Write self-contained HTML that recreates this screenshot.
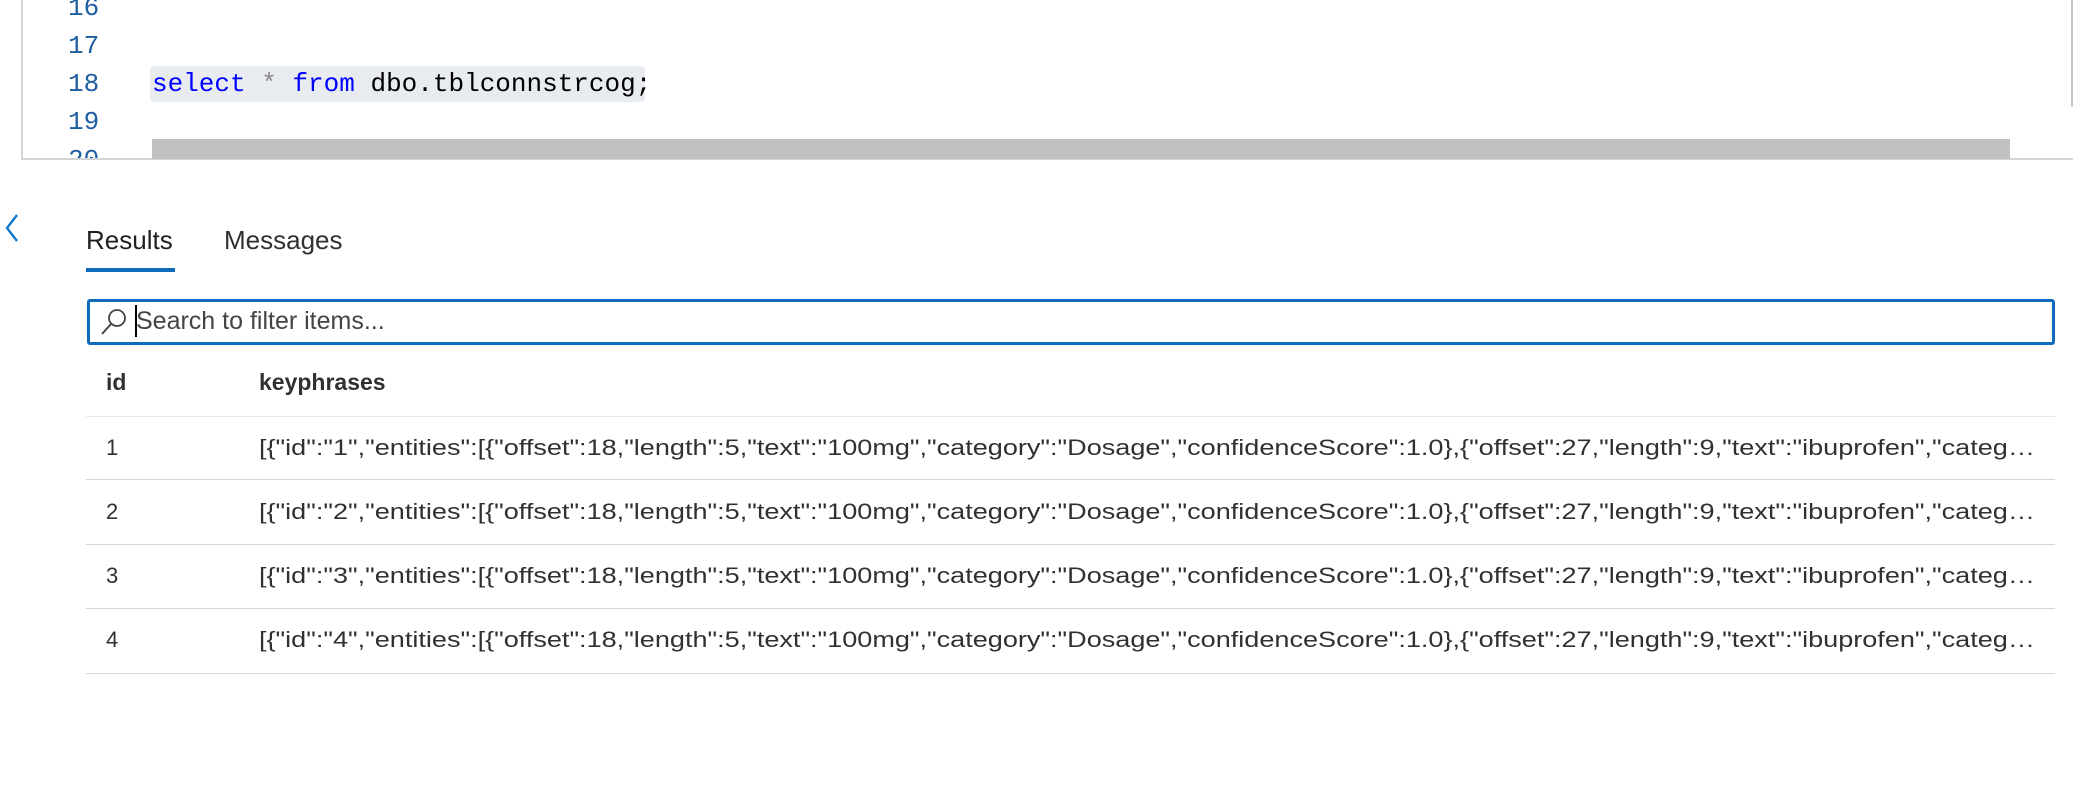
<!DOCTYPE html>
<html><head><meta charset="utf-8"><style>
body{margin:0;width:2076px;height:790px;background:#fff;position:relative;overflow:hidden;font-family:"Liberation Sans",sans-serif;}
.a{position:absolute;}
.ln{position:absolute;left:68px;font-family:"Liberation Mono",monospace;font-size:26px;color:#1f5ea0;line-height:38px;}
.code{font-family:"Liberation Mono",monospace;font-size:26px;line-height:38px;white-space:pre;}
.row{position:absolute;left:86px;width:1969px;height:1px;background:#d6d6d6;}
.cell{position:absolute;font-size:22px;color:#323130;line-height:30px;white-space:nowrap;}
.kp{left:259px;width:1453px;overflow:hidden;text-overflow:ellipsis;transform:scaleX(1.23);transform-origin:0 0;}
</style></head><body>
<div class="a" style="left:21px;top:0;width:2px;height:160px;background:#d4d4d4"></div>
<div class="a" style="left:21px;top:158px;width:2052px;height:2px;background:#d4d4d4"></div>
<div class="a" style="left:2071px;top:0;width:2px;height:107px;background:#c8c8c8"></div>
<div class="ln" style="top:-11px">16</div>
<div class="ln" style="top:27px">17</div>
<div class="ln" style="top:65px">18</div>
<div class="ln" style="top:103px">19</div>
<div class="ln" style="top:141px;height:17px;overflow:hidden">20</div>
<div class="a" style="left:150px;top:66px;width:495px;height:36px;background:#e8ebf0;border-radius:4px"></div>
<div class="a code" style="left:152px;top:65px"><span style="color:#0000ff">select</span> <span style="color:#888">*</span> <span style="color:#0000ff">from</span> dbo.tblconnstrcog;</div>
<div class="a" style="left:152px;top:139px;width:1858px;height:20px;background:#c1c1c1"></div>
<svg class="a" style="left:2px;top:212px" width="20" height="32" viewBox="0 0 20 32"><path d="M15 3 L5 16 L15 29" fill="none" stroke="#0f7ad0" stroke-width="2.4"/></svg>
<div class="a" style="left:86px;top:225px;font-size:26px;color:#201f1e">Results</div>
<div class="a" style="left:224px;top:225px;font-size:26px;color:#323130">Messages</div>
<div class="a" style="left:86px;top:268px;width:89px;height:4px;background:#0f6cbd"></div>
<div class="a" style="left:87px;top:299px;width:1962px;height:40px;border:3px solid #0f6cbd;border-radius:3px"></div>
<svg class="a" style="left:100px;top:307px" width="28" height="30" viewBox="0 0 28 30"><circle cx="17" cy="11" r="8" fill="none" stroke="#444" stroke-width="1.8"/><path d="M11 17 L2 27" stroke="#444" stroke-width="2"/></svg>
<div class="a" style="left:135px;top:305px;width:2px;height:32px;background:#000"></div>
<div class="a" style="left:136px;top:305px;font-size:25px;color:#444;line-height:32px">Search to filter items...</div>
<div class="cell" style="left:106px;top:367px;font-weight:bold;color:#323130;font-size:23px">id</div>
<div class="cell" style="left:259px;top:367px;font-weight:bold;color:#323130;font-size:23px">keyphrases</div>
<div class="row" style="top:416px;background:#e8e8e8"></div>
<div class="cell" style="left:106px;top:433px">1</div>
<div class="cell kp" style="top:433px">[{"id":"1","entities":[{"offset":18,"length":5,"text":"100mg","category":"Dosage","confidenceScore":1.0},{"offset":27,"length":9,"text":"ibuprofen","category":"MedicationName","confidenceScore":1.0}]}]</div>
<div class="row" style="top:479px"></div>
<div class="cell" style="left:106px;top:497px">2</div>
<div class="cell kp" style="top:497px">[{"id":"2","entities":[{"offset":18,"length":5,"text":"100mg","category":"Dosage","confidenceScore":1.0},{"offset":27,"length":9,"text":"ibuprofen","category":"MedicationName","confidenceScore":1.0}]}]</div>
<div class="row" style="top:544px"></div>
<div class="cell" style="left:106px;top:561px">3</div>
<div class="cell kp" style="top:561px">[{"id":"3","entities":[{"offset":18,"length":5,"text":"100mg","category":"Dosage","confidenceScore":1.0},{"offset":27,"length":9,"text":"ibuprofen","category":"MedicationName","confidenceScore":1.0}]}]</div>
<div class="row" style="top:608px"></div>
<div class="cell" style="left:106px;top:625px">4</div>
<div class="cell kp" style="top:625px">[{"id":"4","entities":[{"offset":18,"length":5,"text":"100mg","category":"Dosage","confidenceScore":1.0},{"offset":27,"length":9,"text":"ibuprofen","category":"MedicationName","confidenceScore":1.0}]}]</div>
<div class="row" style="top:673px"></div>
</body></html>
